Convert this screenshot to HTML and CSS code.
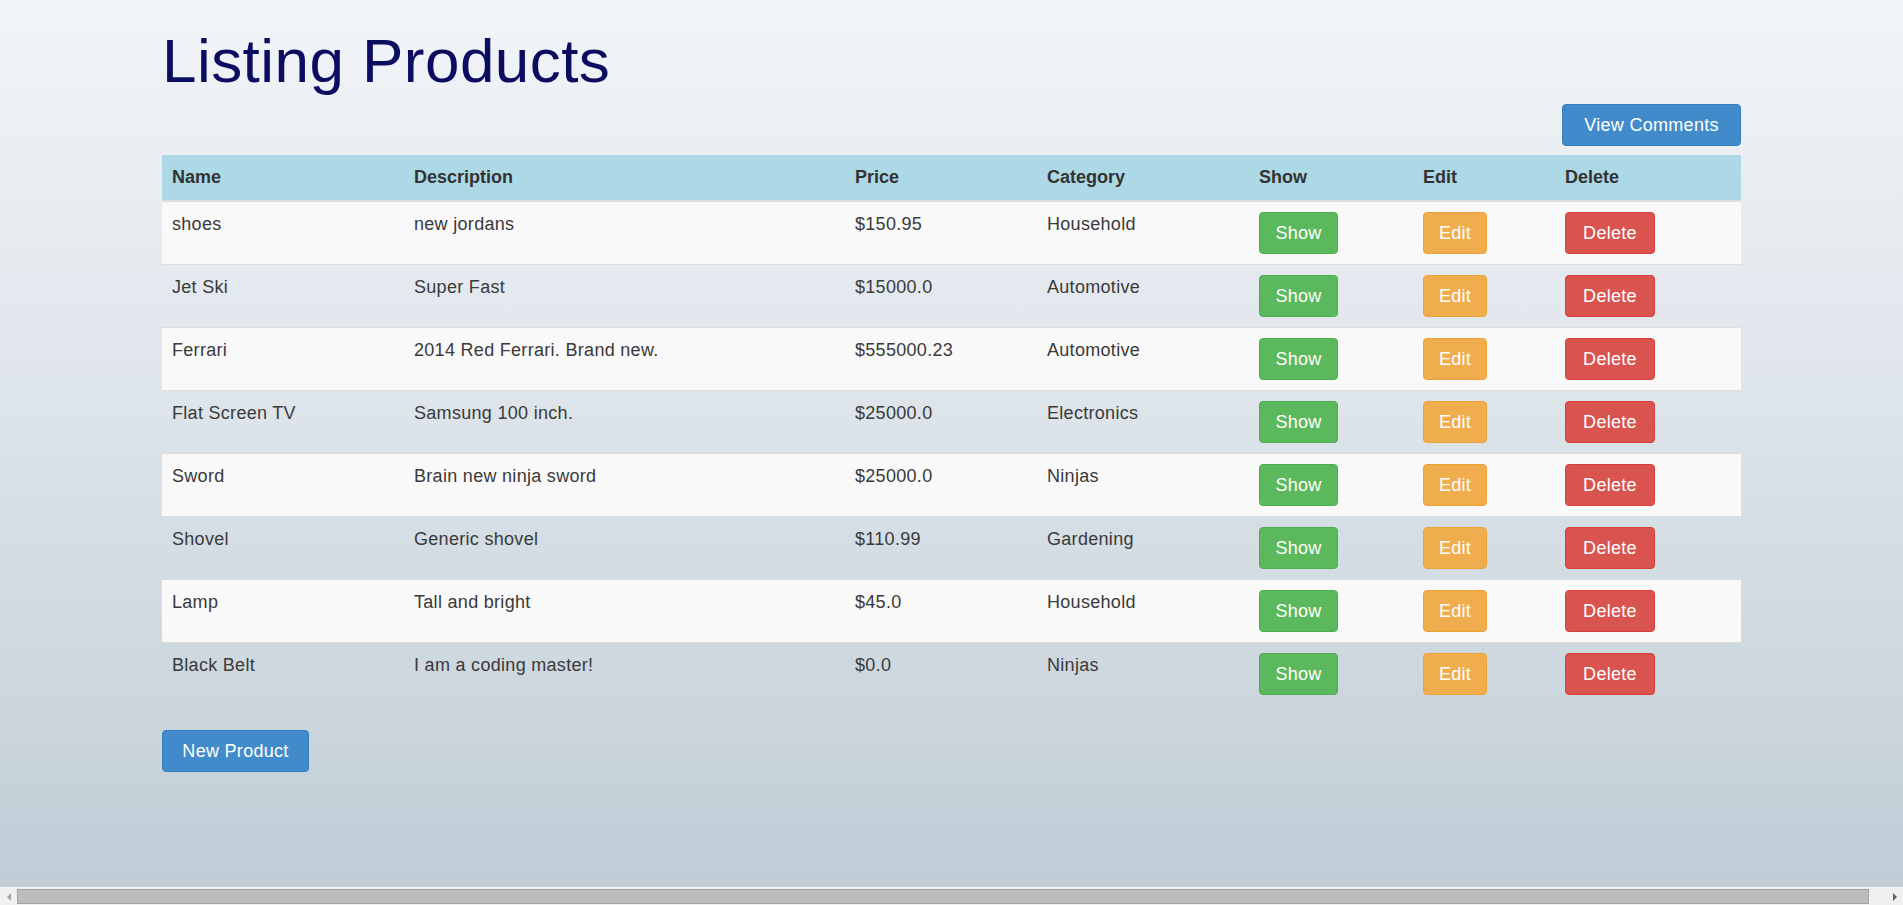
FILE: index.html
```html
<!DOCTYPE html>
<html lang="en">
<head>
<meta charset="utf-8">
<title>Listing Products</title>
<link rel="stylesheet" href="styles.css">
</head>
<body>
<div class="container">
  <h1 class="title">Listing Products</h1>
  <div class="toolbar">
    <a class="btn btn-primary btn-comments" href="#">View Comments</a>
  </div>
  <table class="products">
    <colgroup>
      <col class="c-name"><col class="c-desc"><col class="c-price"><col class="c-cat"><col class="c-show"><col class="c-edit"><col class="c-del">
    </colgroup>
    <thead>
      <tr><th>Name</th><th>Description</th><th>Price</th><th>Category</th><th>Show</th><th>Edit</th><th>Delete</th></tr>
    </thead>
    <tbody>
      <tr><td>shoes</td><td>new jordans</td><td>$150.95</td><td>Household</td><td><a class="btn btn-success btn-show" href="#">Show</a></td><td><a class="btn btn-warning btn-edit" href="#">Edit</a></td><td><a class="btn btn-danger btn-del" href="#">Delete</a></td></tr>
      <tr><td>Jet Ski</td><td>Super Fast</td><td>$15000.0</td><td>Automotive</td><td><a class="btn btn-success btn-show" href="#">Show</a></td><td><a class="btn btn-warning btn-edit" href="#">Edit</a></td><td><a class="btn btn-danger btn-del" href="#">Delete</a></td></tr>
      <tr><td>Ferrari</td><td>2014 Red Ferrari. Brand new.</td><td>$555000.23</td><td>Automotive</td><td><a class="btn btn-success btn-show" href="#">Show</a></td><td><a class="btn btn-warning btn-edit" href="#">Edit</a></td><td><a class="btn btn-danger btn-del" href="#">Delete</a></td></tr>
      <tr><td>Flat Screen TV</td><td>Samsung 100 inch.</td><td>$25000.0</td><td>Electronics</td><td><a class="btn btn-success btn-show" href="#">Show</a></td><td><a class="btn btn-warning btn-edit" href="#">Edit</a></td><td><a class="btn btn-danger btn-del" href="#">Delete</a></td></tr>
      <tr><td>Sword</td><td>Brain new ninja sword</td><td>$25000.0</td><td>Ninjas</td><td><a class="btn btn-success btn-show" href="#">Show</a></td><td><a class="btn btn-warning btn-edit" href="#">Edit</a></td><td><a class="btn btn-danger btn-del" href="#">Delete</a></td></tr>
      <tr><td>Shovel</td><td>Generic shovel</td><td>$110.99</td><td>Gardening</td><td><a class="btn btn-success btn-show" href="#">Show</a></td><td><a class="btn btn-warning btn-edit" href="#">Edit</a></td><td><a class="btn btn-danger btn-del" href="#">Delete</a></td></tr>
      <tr><td>Lamp</td><td>Tall and bright</td><td>$45.0</td><td>Household</td><td><a class="btn btn-success btn-show" href="#">Show</a></td><td><a class="btn btn-warning btn-edit" href="#">Edit</a></td><td><a class="btn btn-danger btn-del" href="#">Delete</a></td></tr>
      <tr><td>Black Belt</td><td>I am a coding master!</td><td>$0.0</td><td>Ninjas</td><td><a class="btn btn-success btn-show" href="#">Show</a></td><td><a class="btn btn-warning btn-edit" href="#">Edit</a></td><td><a class="btn btn-danger btn-del" href="#">Delete</a></td></tr>
    </tbody>
  </table>
  <a class="btn btn-primary btn-new" href="#">New Product</a>
</div>
<div class="hscroll" aria-hidden="true">
  <span class="arrow arrow-left"></span>
  <div class="track"><div class="thumb"></div></div>
  <span class="arrow arrow-right"></span>
</div>
</body>
</html>
```
FILE: styles.css
```css
html, body {
  margin: 0;
  padding: 0;
}
body {
  min-height: 905px;
  overflow: hidden;
  background: linear-gradient(to bottom, #f2f5f8 0%, #dde4ea 45%, #bfccd5 100%);
  font-family: "Liberation Sans", Arial, sans-serif;
  font-size: 18px;
  line-height: 25px;
  color: #3a3a3a;
}
.container {
  width: 1579px;
  margin: 0 auto;
}
.title {
  margin: 27px 0 9px;
  font-size: 62px;
  line-height: 68px;
  font-weight: normal;
  letter-spacing: 0.45px;
  color: #0c0c60;
}
.toolbar {
  display: flex;
  justify-content: flex-end;
  margin-bottom: 9px;
}
.btn {
  display: inline-block;
  box-sizing: border-box;
  height: 42px;
  padding: 7px 0;
  border: 1px solid transparent;
  border-radius: 4px;
  font-size: 18px;
  line-height: 26px;
  letter-spacing: 0.3px;
  text-align: center;
  color: #fff;
  text-decoration: none;
  white-space: nowrap;
}
.btn-primary { background: #428bca; border-color: #357ebd; }
.btn-success { background: #5cb85c; border-color: #4cae4c; }
.btn-warning { background: #f0ad4e; border-color: #eea236; }
.btn-danger  { background: #d9534f; border-color: #d43f3a; }
.btn-comments { width: 179px; }
.btn-new { width: 147px; }
.btn-show { width: 79px; }
.btn-edit { width: 64px; }
.btn-del { width: 90px; }

.products {
  width: 100%;
  table-layout: fixed;
  border-collapse: collapse;
  border-spacing: 0;
  margin-bottom: 25px;
}
.c-name { width: 242px; }
.c-desc { width: 441px; }
.c-price { width: 192px; }
.c-cat { width: 212px; }
.c-show { width: 164px; }
.c-edit { width: 142px; }
.c-del { width: 186px; }
.products th {
  background: #add8e6;
  padding: 10px;
  text-align: left;
  font-weight: bold;
  color: #333;
  vertical-align: bottom;
  border-bottom: 2px solid #dddddd;
}
.products td {
  padding: 10px;
  vertical-align: top;
  letter-spacing: 0.3px;
  border-top: 1px solid #dddddd;
}
.products tbody tr:first-child td {
  border-top: 0;
}
.products tbody tr:nth-child(odd) td {
  background: #f9f9f9;
}

.hscroll {
  position: fixed;
  left: 0;
  right: 0;
  bottom: 0;
  height: 17px;
  display: flex;
  align-items: center;
  background: #f0f0f0;
  border-top: 1px solid #f7f7f7;
}
.arrow {
  width: 17px;
  height: 17px;
  display: flex;
  align-items: center;
  justify-content: center;
}
.arrow::before {
  content: "";
  width: 0;
  height: 0;
  border-top: 4px solid transparent;
  border-bottom: 4px solid transparent;
}
.arrow-left::before { border-right: 4px solid #a3a3a3; }
.arrow-right::before { border-left: 4px solid #606060; }
.track {
  flex: 1;
  height: 15px;
  display: flex;
}
.thumb {
  width: 1852px;
  box-sizing: border-box;
  height: 15px;
  background: #bcbcbc;
  border: 1px solid #a3a3a3;
}
```
